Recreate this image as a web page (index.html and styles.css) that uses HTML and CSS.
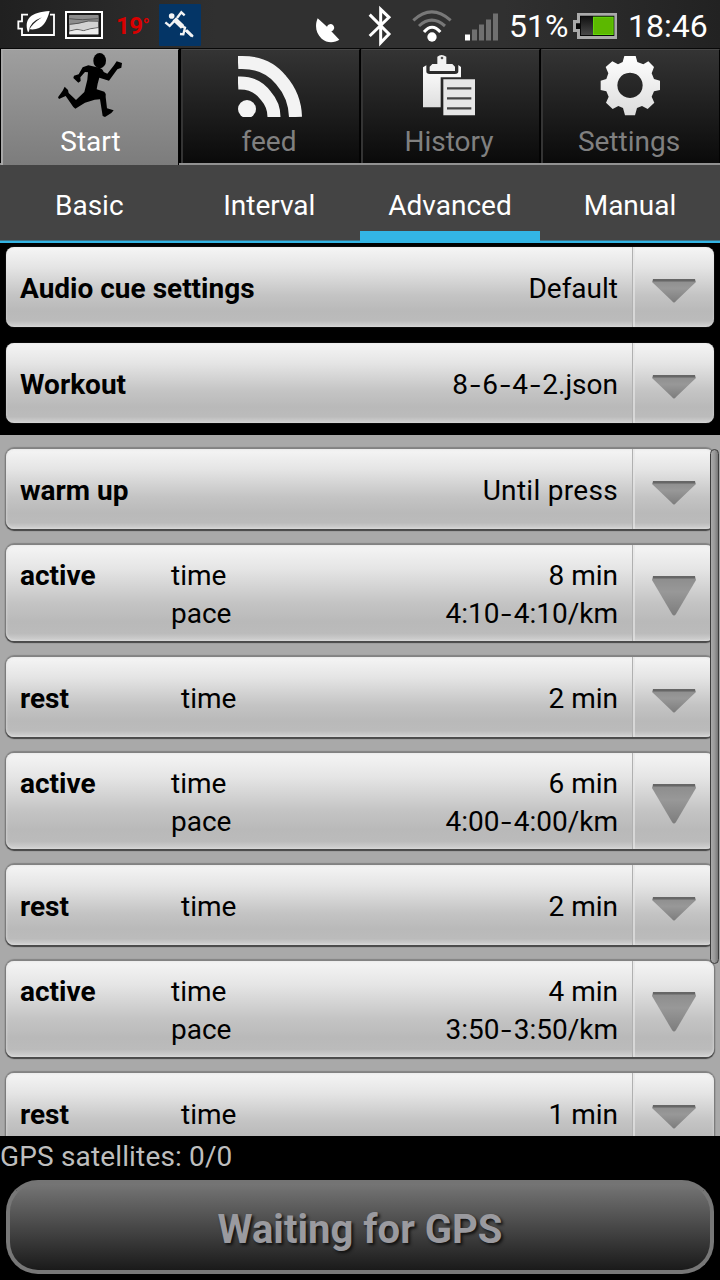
FILE: index.html
```html
<!DOCTYPE html>
<html lang="en">
<head>
<meta charset="utf-8">
<title>Workout</title>
<link rel="stylesheet" href="styles.css">
</head>
<body>
<div class="screen">
  <header class="status">
    <div class="status-left">
      <svg class="ic-eco" width="38" height="30" viewBox="51 30 114 90"><path d="M84 44H66v20H55v22h11v19h96V44h-12" fill="none" stroke="#fff" stroke-width="5.5"/><path d="M84 97C71 57 92 36 149 33C140 65 128 92 89 88Q96 72 126 52Q88 66 87 94Z" fill="#fff"/></svg>
      <svg class="ic-pic" width="38" height="28" viewBox="195 33 114 84"><path fill="#fff" d="M195 33h114v84H195z"/><path fill="#171717" d="M201 39h102v72H201z"/><path fill="#d2d2d2" d="M208 46h87v57h-87z"/><path fill="#8c8c8c" d="M208 46h87v17l-30 1-31 7-26 3z"/><path d="M208 56l20 2 20 1 47-3M208 73l26-3 31-7 30 1M208 93l23-5 20 4 22-6 22-3" stroke="#4a4a4a" stroke-width="2.5" fill="none"/><path fill="#ececec" d="M208 95l23-5 20 4 22-6 22-3v18h-87z"/></svg>
      <span class="temp">19<i>°</i></span>
      <svg class="ic-app" width="42" height="42" viewBox="477 12 126 126"><rect x="477" y="12" width="126" height="126" rx="3" fill="#043566"/><circle cx="515" cy="48" r="8.5" fill="#f4f4f4"/><path d="M523 57l25 24" stroke="#f4f4f4" stroke-width="15"/><path d="M524 62l-15 16-13-11M531 54l13-17 10 9M546 79l9 4-5 20-10-1M557 91l22 19" stroke="#f4f4f4" stroke-width="7" fill="none"/><path d="M559 91l17 17" stroke="#f4f4f4" stroke-width="9"/></svg>
    </div>
    <div class="status-right">
      <svg class="ic-sat" width="26" height="26" viewBox="285 50 78 78"><path d="M293 54l28 25a11 11 0 1 1 13 14l24 25C345 127 322 130 305 115C287 98 284 75 293 54Z" fill="#fff"/></svg>
      <svg class="ic-bt" width="24" height="42" viewBox="444 15 72 126"><path d="M449 44l58 58-25 26V28l25 24-58 56" stroke="#fff" stroke-width="9" fill="none"/></svg>
      <svg class="ic-wifi" width="40" height="34" viewBox="576 26 120 102"><g fill="none" stroke-width="9"><path d="M580 60Q635 9 692 60" stroke="#787878"/><path d="M597 77Q635 42 675 77" stroke="#787878"/><path d="M612 95Q636 66 661 95" stroke="#fff"/></g><circle cx="636" cy="110" r="14" fill="#fff"/></svg>
      <svg class="ic-sig" width="34" height="28" viewBox="0 0 34 28"><path fill="#fff" d="M0 21.500h5v6H0z"/><path fill="#707070" d="M7 16.500h5v11H7zM14 11.500h5v16h-5zM21 6.500h5v21h-5zM28 .5h5v27h-5z"/></svg>
      <span class="pct">51%</span>
      <svg class="ic-bat" width="44" height="26" viewBox="339 39 132 78"><defs><linearGradient id="cell" x2="0" y2="1"><stop stop-color="#111"/><stop offset="1" stop-color="#484848"/></linearGradient></defs><path fill="#aaa" d="M351 39h120v78H351V96h-12V60h12z"/><path fill="#080808" d="M360 47h103v61H360V87h-12V70h12z"/><path fill="url(#cell)" d="M363 50h36v55h-36z"/><path fill="#63d60b" d="M399 50h62v55h-62z"/><path fill="#5cb800" d="M402 53h56v49h-56z"/></svg>
      <span class="clock">18:46</span>
    </div>
  </header>

  <nav class="tabs">
    <a class="tab active"><svg width="64" height="64" viewBox="174 159 192 192"><ellipse cx="299" cy="182" rx="19" ry="23"/><path d="M265 196L298 203Q309 207 311 216L322 221L342 196L350 184L366 189L364 203L352 208L327 242L298 233L293 251L290 268L313 275Q319 280 317 291L321 325L341 331L334 339L315 351L308 348L300 298L284 299L255 308L226 326L220 321L197 288L177 297L174 292L188 272L194 260L204 270L206 279L228 300L253 276L262 239L264 217L255 216L241 232L242 243L235 248L220 234L222 227L236 223L248 202Z"/></svg><span>Start</span></a>
    <a class="tab"><svg width="64" height="64" viewBox="0 0 64 64" fill="none" stroke="#f3f3f3"><path d="M0 9.500Q28 8 43 27Q57 43 57.500 64" stroke-width="13"/><path d="M0 30Q18 29 28 43Q36 52 36 64" stroke-width="13"/><circle cx="9" cy="56" r="9" fill="#f3f3f3" stroke="none"/></svg><span>feed</span></a>
    <a class="tab"><svg width="64" height="64" viewBox="597 159 192 192"><defs><linearGradient id="paper" x2="0" y2="1"><stop stop-color="#fff"/><stop offset="1" stop-color="#dedede"/></linearGradient></defs><path fill="url(#paper)" d="M612 202l10-6v18q0 8 10 8h76q10 0 10-8v-19l8 6v31h-61v90h-53z"/><path fill="#f2f2f2" d="M655 170q12-10 27 0v22h18l8 8v13h-76v-13l8-8h15z"/><circle cx="669" cy="174" r="4" fill="#555"/><path fill="#e6e6e6" d="M673 238h95v108h-95z"/><path d="M684 265h73M684 295h73M684 325h73" stroke="#444" stroke-width="7"/></svg><span>History</span></a>
    <a class="tab"><svg width="64" height="64" viewBox="414 159 192 192"><defs><linearGradient id="gear" x2="0" y2="1"><stop stop-color="#fff"/><stop offset="1" stop-color="#dcdcdc"/></linearGradient></defs><path fill="url(#gear)" fill-rule="evenodd" d="M493 168h34l5 18 18 7 15-9 17 17-7 19 7 17 18 5v28l-18 4-7 16 8 18-20 19-17-9-15 6-6 22h-30l-6-22-14-6-17 9-20-19 8-18-7-16-17-4v-28l17-5 6-17-8-19 20-17 17 9 14-7zM510 218a38 38 0 1 0 .1 0z"/></svg><span>Settings</span></a>
  </nav>

  <nav class="modes"><a>Basic</a><a>Interval</a><a class="selected">Advanced</a><a>Manual</a></nav>

  <section class="pickers">
    <div class="row"><b>Audio cue settings</b><span class="value">Default</span><span class="drop"><svg class="arrow" viewBox="0 0 44 24"><path d="M1 0H43L44 3 24 22Q22 25 20 22L0 3Z"/><path class="edge" d="M1 1.200H43"/></svg></span></div>
    <div class="row"><b>Workout</b><span class="value">8<i>-</i>6<i>-</i>4<i>-</i>2.json</span><span class="drop"><svg class="arrow" viewBox="0 0 44 24"><path d="M1 0H43L44 3 24 22Q22 25 20 22L0 3Z"/><path class="edge" d="M1 1.200H43"/></svg></span></div>
  </section>

  <main class="steps">
    <div class="row"><b>warm up</b><span class="value until">Until press</span><span class="drop"><svg class="arrow" viewBox="0 0 44 24"><path d="M1 0H43L44 3 24 22Q22 25 20 22L0 3Z"/><path class="edge" d="M1 1.200H43"/></svg></span></div>
    <div class="row tall"><b>active</b><span class="kind">time<br>pace</span><span class="value">8 min<br>4:10<i>-</i>4:10/km</span><span class="drop"><svg class="arrow" viewBox="0 0 44 40"><path d="M1 0H43L44 4 24 38Q22 41 20 38L0 4Z"/><path class="edge" d="M1 1.200H43"/></svg></span></div>
    <div class="row"><b>rest</b><span class="kind">time</span><span class="value">2 min</span><span class="drop"><svg class="arrow" viewBox="0 0 44 24"><path d="M1 0H43L44 3 24 22Q22 25 20 22L0 3Z"/><path class="edge" d="M1 1.200H43"/></svg></span></div>
    <div class="row tall"><b>active</b><span class="kind">time<br>pace</span><span class="value">6 min<br>4:00<i>-</i>4:00/km</span><span class="drop"><svg class="arrow" viewBox="0 0 44 40"><path d="M1 0H43L44 4 24 38Q22 41 20 38L0 4Z"/><path class="edge" d="M1 1.200H43"/></svg></span></div>
    <div class="row"><b>rest</b><span class="kind">time</span><span class="value">2 min</span><span class="drop"><svg class="arrow" viewBox="0 0 44 24"><path d="M1 0H43L44 3 24 22Q22 25 20 22L0 3Z"/><path class="edge" d="M1 1.200H43"/></svg></span></div>
    <div class="row tall"><b>active</b><span class="kind">time<br>pace</span><span class="value">4 min<br>3:50<i>-</i>3:50/km</span><span class="drop"><svg class="arrow" viewBox="0 0 44 40"><path d="M1 0H43L44 4 24 38Q22 41 20 38L0 4Z"/><path class="edge" d="M1 1.200H43"/></svg></span></div>
    <div class="row"><b>rest</b><span class="kind">time</span><span class="value">1 min</span><span class="drop"><svg class="arrow" viewBox="0 0 44 24"><path d="M1 0H43L44 3 24 22Q22 25 20 22L0 3Z"/><path class="edge" d="M1 1.200H43"/></svg></span></div>
    <div class="scrollbar"></div>
  </main>

  <footer class="footer">
    <p class="gps">GPS satellites: 0/0</p>
    <button class="wait">Waiting for GPS</button>
  </footer>
  <svg class="defs" width="0" height="0"><defs><linearGradient id="arrow-fill" x2="0" y2="1"><stop stop-color="#8c8c8c"/><stop offset=".4" stop-color="#989898"/><stop offset="1" stop-color="#7d7d7d"/></linearGradient></defs></svg>
</div>
</body>
</html>
```
FILE: styles.css
```css
* { box-sizing: border-box; }
body { margin: 0; background: #000; font: 28px/38px Roboto, "Noto Sans", sans-serif; color: #000; }
.screen { width: 720px; height: 1280px; display: flex; flex-direction: column; overflow: hidden; background: #000; }
svg { display: block; flex: none; }
.defs { position: absolute; }

.status { height: 49px; flex: none; display: flex; justify-content: space-between; background: linear-gradient(90deg, #202020, #303030 30%, #303030 70%, #222); border-bottom: 1px solid #080808; color: #fff; }
.status-left, .status-right { display: flex; align-items: flex-start; }
.ic-eco { margin: 10px 0 0 17px; }
.ic-pic { margin: 11px 0 0 10px; }
.temp { width: 43px; margin: 7px 0 0 13px; font-weight: 700; font-size: 24px; color: #d90000; white-space: nowrap; letter-spacing: -.5px; }
.temp i { font-style: normal; font-size: 19px; vertical-align: 2px; }
.ic-app { margin: 4px 0 0 0; }
.ic-sat { margin-top: 17px; }
.ic-bt { margin: 5px 0 0 27px; }
.ic-wifi { margin: 9px 0 0 20px; }
.ic-sig { margin: 12.500px 0 0 13px; }
.pct, .clock { font-size: 32px; white-space: nowrap; margin-top: 7px; }
.pct { width: 64px; padding-left: 10px; }
.ic-bat { margin: 13px 0 0 10px; }
.clock { width: 92px; margin-left: 11px; }

.tabs { height: 116px; flex: none; display: grid; grid-template-columns: repeat(4, 180px); border-bottom: 2px solid #929292; background: #000; }
.tab { display: flex; flex-direction: column; align-items: center; margin-left: 1px; padding-top: 3px; color: #808080; background: linear-gradient(#343434, #1d1d1d 55%, #0a0a0a); border-top: 1px solid #484848; border-left: 2px solid #343434; border-right: 1px solid #030303; }
.tab svg { margin-left: -2px; }
.tab span { margin: 6px 0 0 -4px; }
.tab.active { color: #fff; background: linear-gradient(#9f9f9f, #7c7c7c); border-left-color: #a8a8a8; border-top-color: #aaa; margin-bottom: -2px; margin-right: 1px; }
.tab.active svg { margin-left: -1px; }
.tab.active span { margin-left: 0; }

.modes { height: 78px; flex: none; display: grid; grid-template-columns: repeat(4, 1fr); background: #444; color: #fff; border-bottom: 2px solid #33b5e5; box-shadow: inset 0 -1px #3d7488; text-align: center; }
.modes a { padding-top: 22px; }
.modes a:nth-child(-n+2) { padding-right: 1.500px; }
.modes .selected { border-bottom: 10px solid #33b5e5; }

.pickers { height: 192px; flex: none; padding: 4px 6px 12px; display: flex; flex-direction: column; gap: 16px; }
.steps { position: relative; height: 701px; flex: none; padding: 14px 6px 0; display: flex; flex-direction: column; gap: 16px; background: #a9a9a9; overflow: hidden; }
.row { height: 80px; flex: none; display: flex; border-radius: 8px; padding: 23px 0 0 14px; background: linear-gradient(#f5f5f5, #e5e5e5 25%, #c4c4c4 60%, #b9b9b9 80%, #bbb 92%, #d2d2d2); box-shadow: inset 0 0 2px #ddd, 0 0 1px #707070; }
.steps .row { box-shadow: inset 0 0 3px #e0e0e0, 0 -1px 1px 1px #828282, 0 1px 1px 1px #444; }
.row b { width: 151px; white-space: nowrap; }
.row .kind { padding-left: 10px; }
.row.tall { height: 96px; padding-top: 12px; }
.tall .kind { padding-left: 0; }
.row .value { margin-left: auto; padding-right: 14px; text-align: right; white-space: nowrap; }
.value i { display: inline-block; width: 14.300px; font-style: normal; text-align: center; transform: scaleX(1.350); }
.row .until { letter-spacing: .3px; }
.drop { width: 82px; height: 80px; margin-top: -23px; padding: 32px 0 0 19px; border-left: 1px solid #b0b0b0; box-shadow: inset 2px 0 #e6e6e6aa; }
.tall .drop { height: 96px; margin-top: -12px; padding-top: 31px; }
.arrow { width: 44px; height: 24px; fill: url(#arrow-fill); }
.tall .arrow { height: 40px; }
.arrow .edge { stroke: #666; stroke-width: 2.400px; }
.scrollbar { position: absolute; right: 1px; top: 14px; width: 9px; height: 515px; border: 1px solid #3c3c3c; border-radius: 5px; background: linear-gradient(90deg, #aaa, #999 50%, #777); }

.footer { height: 144px; display: flex; flex-direction: column; padding: 0 6px; }
.gps { margin: 2px -6px 4px; color: #bebebe; letter-spacing: .15px; }
.wait { height: 94px; border: 4px solid #777; border-top-color: #747474; border-radius: 32px; background: linear-gradient(#757575, #1a1a1a); color: #9a9a9f; font: 700 40px/48px Roboto, "Noto Sans", sans-serif; text-shadow: 2px 2px 3px #111; padding: 5px 0 0; }
```
